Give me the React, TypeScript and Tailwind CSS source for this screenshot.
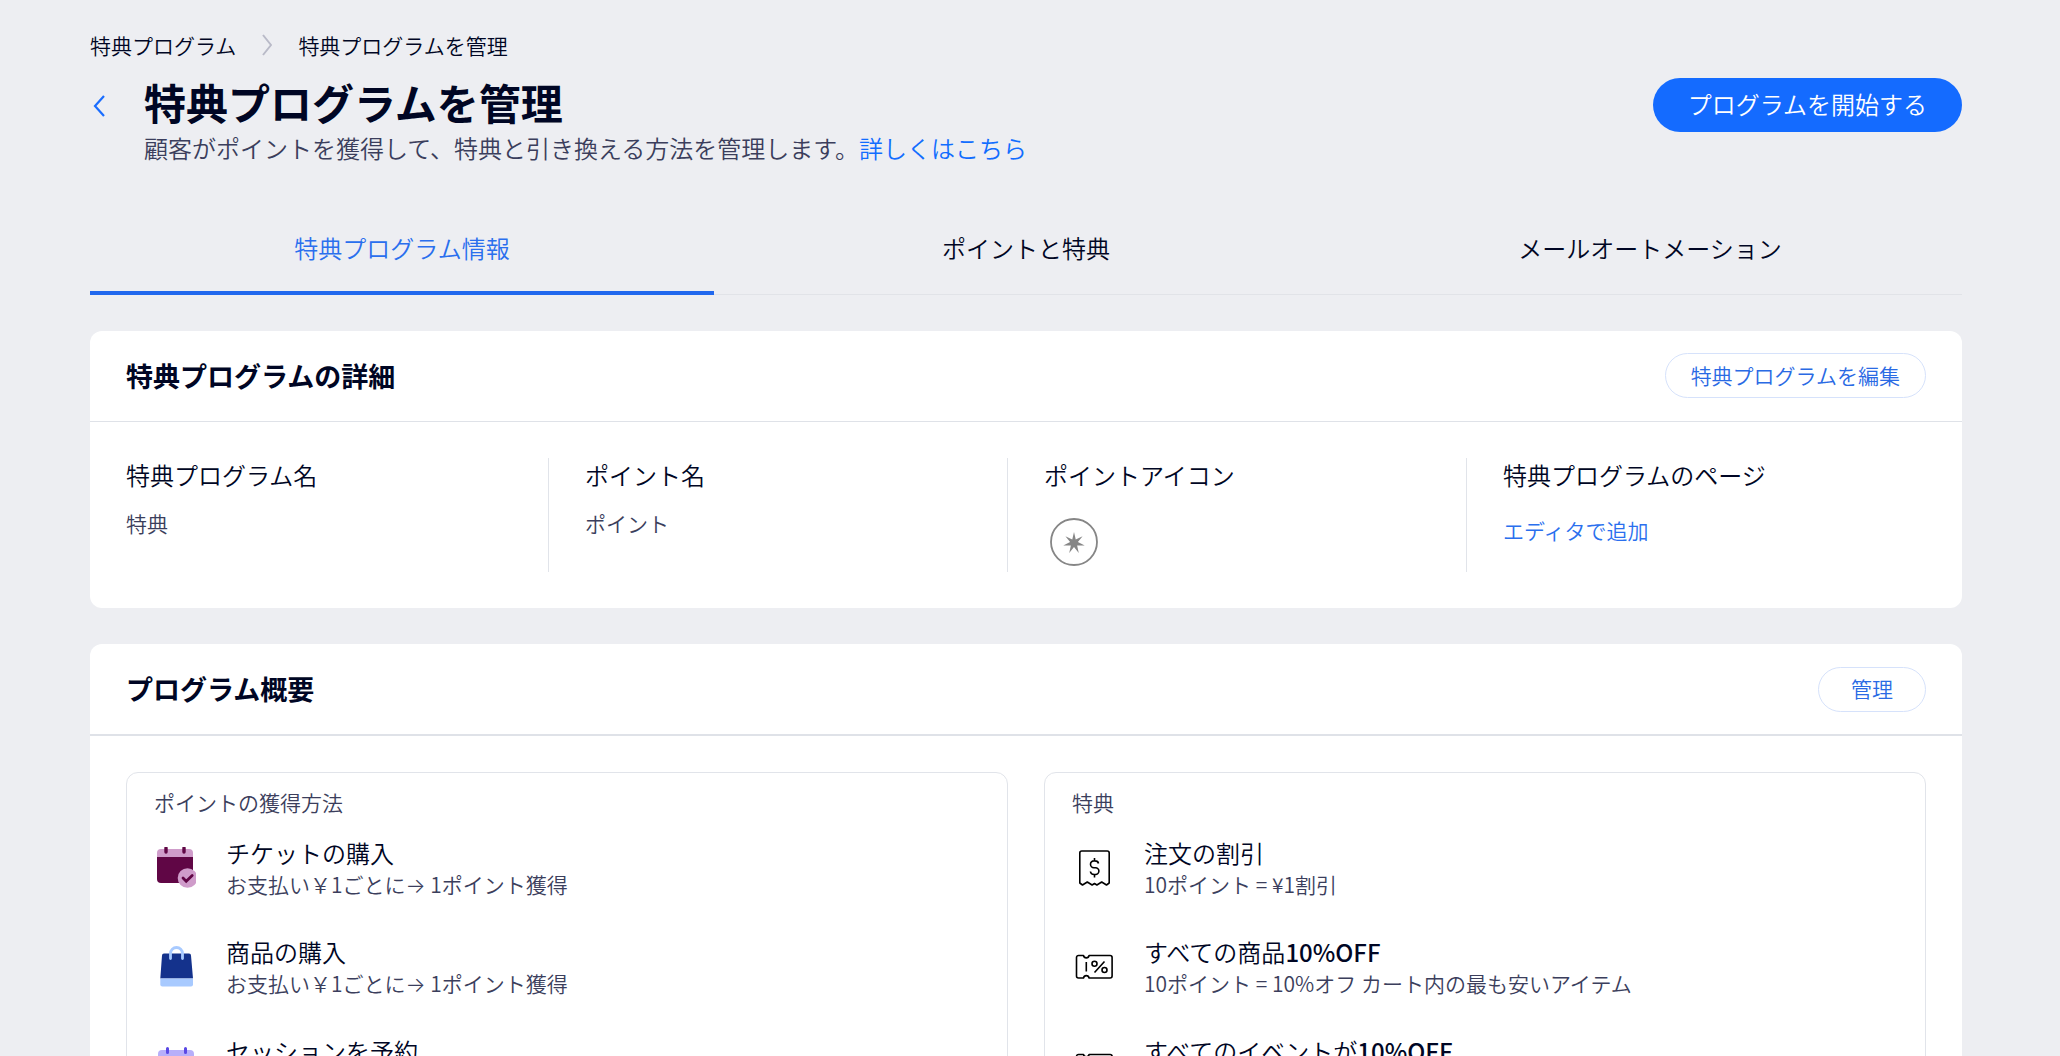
import type { ReactNode } from "react";

const tabs = ["特典プログラム情報", "ポイントと特典", "メールオートメーション"];

const starPoints = Array.from({ length: 14 }, (_, i) => {
  const radius = i % 2 === 0 ? 11 : 4;
  const angle = (Math.PI / 7) * i - Math.PI / 2;
  return `${24 + radius * Math.cos(angle)},${25 + radius * Math.sin(angle)}`;
}).join(" ");

const PointIcon = () => (
  <svg className="w-12 h-12" viewBox="0 0 48 48" aria-hidden="true">
    <circle cx="24" cy="24" r="23" fill="none" stroke="#868686" strokeWidth="1.8" />
    <polygon points={starPoints} fill="#868686" />
  </svg>
);

const TicketPurchaseIcon = () => (
  <svg className="w-[42px] h-[42px]" viewBox="-1 1 42 42" aria-hidden="true">
    <path d="M2 11h36v22a4 4 0 0 1-4 4H6a4 4 0 0 1-4-4z" fill="#600645" />
    <path d="M2 11V7a4 4 0 0 1 4-4h28a4 4 0 0 1 4 4v4z" fill="#cf9cca" />
    <path d="M11 2v4M29 2v4" stroke="#600645" strokeWidth="3.4" strokeLinecap="round" />
    <circle cx="32.5" cy="32" r="9.8" fill="#cf9cca" />
    <path d="M28 32l3.2 3.2 6-5.8" fill="none" stroke="#600645" strokeWidth="2.8" strokeLinecap="round" />
  </svg>
);

const BagIcon = () => (
  <svg className="w-[42px] h-[42px]" viewBox="-1 0 42 42" aria-hidden="true">
    <path d="M9 7.5h25a2 2 0 0 1 2 2L38 32.5H5.3L7 9.5a2 2 0 0 1 2-2z" fill="#14328c" />
    <path d="M5.3 32.5H38v6a2 2 0 0 1-2 2H7.3a2 2 0 0 1-2-2z" fill="#a8caff" />
    <path d="M15.5 12.5V7.5a6 6 0 0 1 12 0v5" fill="none" stroke="#a8caff" strokeWidth="2.8" strokeLinecap="round" />
  </svg>
);

const SessionIcon = () => (
  <svg className="w-[42px] h-[42px]" viewBox="-1 0 42 42" aria-hidden="true">
    <path d="M3 13h36v21a4 4 0 0 1-4 4H7a4 4 0 0 1-4-4z" fill="#5a48d8" />
    <path d="M3 13V9a4 4 0 0 1 4-4h28a4 4 0 0 1 4 4v4z" fill="#b7affa" />
    <path d="M12.5 3.5v4M30.5 3.5v4" stroke="#5a48e5" strokeWidth="3" strokeLinecap="round" />
  </svg>
);

const ReceiptIcon = () => (
  <svg className="w-[42px] h-[42px]" viewBox="-1 0 42 42" fill="none" stroke="#000" strokeWidth="1.6" aria-hidden="true">
    <path d="M6.8 36V6a2 2 0 0 1 2-2h25.400a2 2 0 0 1 2 2v30l-2.700 2-4.800-3-4.800 3-2.400-1.500-2.400 1.500-4.800-3-4.800 3z" strokeLinejoin="round" />
    <path d="M25.5 16.5a3.600 3 0 0 0-3.600-2.600h-1a3.400 3.400 0 0 0 0 6.800h1.600a3.400 3.400 0 0 1 0 6.800h-1.200a3.800 3.400 0 0 1-3.900-3M21.500 11v3M21.500 27.500v3" />
  </svg>
);

const CouponIcon = () => (
  <svg className="w-[42px] h-[42px]" viewBox="-1 0 42 42" fill="none" stroke="#000" strokeWidth="1.6" aria-hidden="true">
    <path d="M5.5 9.5h5c.6 3.200 5 3.200 5.600 0h21a2 2 0 0 1 2 2v18.500a2 2 0 0 1-2 2h-21c-.6-3.200-5-3.200-5.600 0h-5a2 2 0 0 1-2-2v-18.500a2 2 0 0 1 2-2z" strokeLinejoin="round" />
    <path d="M13.3 16v9.500M31.500 15.500l-10 11" />
    <circle cx="21.5" cy="17.8" r="2.5" />
    <circle cx="31.5" cy="24" r="2.5" />
  </svg>
);

const Arrow = () => <span className="font-['Roboto','Inter']">→</span>;

const earnDetail = (
  <>
    お支払い￥1ごとに
    <Arrow /> 1ポイント獲得
  </>
);

const earnRules = [
  { icon: TicketPurchaseIcon, title: "チケットの購入", detail: earnDetail },
  { icon: BagIcon, title: "商品の購入", detail: earnDetail },
  { icon: SessionIcon, title: "セッションを予約", detail: earnDetail },
];

const rewards = [
  { icon: ReceiptIcon, title: "注文の割引", detail: "10ポイント = ¥1割引" },
  {
    icon: CouponIcon,
    title: (
      <>
        すべての商品<span className="font-medium">10%OFF</span>
      </>
    ),
    detail: "10ポイント = 10%オフ カート内の最も安いアイテム",
  },
  {
    icon: CouponIcon,
    title: (
      <>
        すべてのイベントが<span className="font-medium">10%OFF</span>
      </>
    ),
    detail: "10ポイント = 10%オフ",
  },
];

type Item = { icon: () => ReactNode; title: ReactNode; detail: ReactNode };

const OutlineButton = ({ children }: { children: ReactNode }) => (
  <button
    type="button"
    className="h-[45px] min-w-[108px] px-[25px] pb-0.5 rounded-full border border-[#d6e2fb] bg-white text-[21px] leading-[30px] text-[#2a6ae4]"
  >
    {children}
  </button>
);

const ItemList = ({ heading, items }: { heading: string; items: Item[] }) => (
  <section className="rounded-xl border border-[#e1e4ea] px-[27px] pt-3.5 pb-7">
    <h3 className="text-[21px] leading-[30px] text-[#3b3e5c]">{heading}</h3>
    <ul>
      {items.map((item, index) => (
        <li key={index} className="flex items-start gap-[30px] h-[99px] pt-5">
          <div className="pt-2.5 shrink-0">
            <item.icon />
          </div>
          <div>
            <p className="text-[24px] leading-[32px] text-[#000624]">{item.title}</p>
            <p className="text-[21px] leading-[30px] text-[#3b3e5c]">{item.detail}</p>
          </div>
        </li>
      ))}
    </ul>
  </section>
);

const Field = ({ label, children }: { label: string; children: ReactNode }) => (
  <div className="h-[114px] border-r border-[#e1e4ea] last:border-r-0">
    <dt className="text-[24px] leading-[34px] text-[#000624]">{label}</dt>
    <dd className="text-[21px] leading-[30px] text-[#3b3e5c]">{children}</dd>
  </div>
);

const App = () => {
  return (
    <div className="min-h-screen bg-[#edeef2] pl-[90px] pr-[98px] pt-[27px] pb-9 font-['Noto_Sans_CJK_JP',sans-serif] font-[350] text-[#000624]">
      <nav className="flex items-center text-[21px] leading-[36px]" aria-label="breadcrumb">
        <a href="#">特典プログラム</a>
        <svg className="w-[10px] h-[22px] mx-[26px]" viewBox="0 0 10 22" fill="none" stroke="#b9bac8" strokeWidth="2" aria-hidden="true">
          <path d="M1 1l8 10-8 10" />
        </svg>
        <span>特典プログラムを管理</span>
      </nav>

      <header className="flex items-start justify-between mt-[15px]">
        <div className="flex">
          <button type="button" className="h-14 w-[54px] px-[3px]" aria-label="戻る">
            <svg className="w-3 h-[22px]" viewBox="0 0 12 22" fill="none" stroke="#1a6dff" strokeWidth="2.2" aria-hidden="true">
              <path d="M11 1L2 11l9 10" />
            </svg>
          </button>
          <div>
            <h1 className="text-[42px] leading-[48px] font-bold">特典プログラムを管理</h1>
            <p className="mt-1 text-[24px] leading-[36px] text-[#3b3e5c]">
              顧客がポイントを獲得して、特典と引き換える方法を管理します。
              <a href="#" className="text-[#116dff]">詳しくはこちら</a>
            </p>
          </div>
        </div>
        <button type="button" className="h-[54px] px-[35px] pb-0.5 rounded-full bg-[#146bff] text-[24px] leading-[36px] text-white">
          プログラムを開始する
        </button>
      </header>

      <div className="grid grid-cols-3 mt-[38px] border-b border-[#e1e3e8]" role="tablist">
        {tabs.map((tab, index) => (
          <button
            key={tab}
            type="button"
            role="tab"
            aria-selected={index === 0}
            className={
              index === 0
                ? "h-[91px] -mb-px border-b-4 border-[#2168ee] text-[24px] leading-[36px] text-[#2a6fee]"
                : "h-[91px] -mb-px border-b-4 border-transparent text-[24px] leading-[36px]"
            }
          >
            {tab}
          </button>
        ))}
      </div>

      <main className="flex flex-col gap-9 mt-9">
        <section className="rounded-xl bg-white">
          <div className="flex items-center justify-between h-[91px] px-9 pb-px border-b border-[#dfe2e8]">
            <h2 className="text-[27px] leading-[36px] font-bold">特典プログラムの詳細</h2>
            <OutlineButton>特典プログラムを編集</OutlineButton>
          </div>
          <dl className="grid grid-cols-4 gap-9 p-9">
            <Field label="特典プログラム名">
              <p className="mt-4">特典</p>
            </Field>
            <Field label="ポイント名">
              <p className="mt-4">ポイント</p>
            </Field>
            <Field label="ポイントアイコン">
              <div className="mt-[26px] ml-1.5">
                <PointIcon />
              </div>
            </Field>
            <Field label="特典プログラムのページ">
              <a href="#" className="block mt-[23px] text-[#2a6fee]">エディタで追加</a>
            </Field>
          </dl>
        </section>

        <section className="rounded-xl bg-white">
          <div className="flex items-center justify-between h-[92px] px-9 border-b-2 border-[#dfe2e8]">
            <h2 className="text-[27px] leading-[36px] font-bold">プログラム概要</h2>
            <OutlineButton>管理</OutlineButton>
          </div>
          <div className="grid grid-cols-2 gap-9 p-9">
            <ItemList heading="ポイントの獲得方法" items={earnRules} />
            <ItemList heading="特典" items={rewards} />
          </div>
        </section>
      </main>
    </div>
  );
};

export default App;
